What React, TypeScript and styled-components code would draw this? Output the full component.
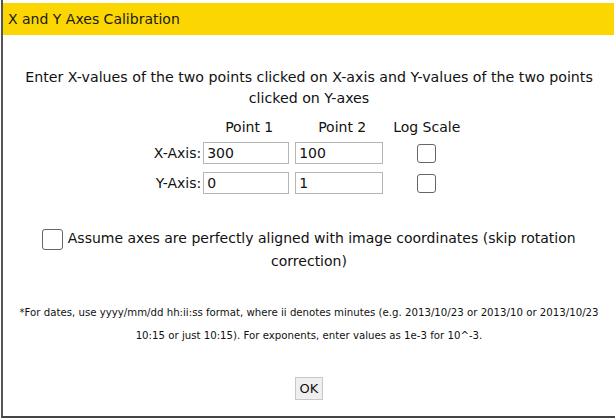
import styled, { createGlobalStyle } from "styled-components";

const GlobalStyle = createGlobalStyle`
  html, body {
    margin: 0;
    padding: 0;
    background: #ffffff;
  }
  body {
    font-family: "DejaVu Sans", Verdana, sans-serif;
    color: #111;
  }
`;

const Dialog = styled.div`
  box-sizing: border-box;
  width: 614px;
  height: 418px;
  margin-left: 1px;
  padding-top: 3px;
  border-left: 2px solid #555;
  border-bottom: 2px solid #444;
  display: flex;
  flex-direction: column;
`;

const TitleBar = styled.div`
  height: 32px;
  margin-right: 1px;
  background: #fcd600;
  display: flex;
  align-items: center;
  padding-left: 5px;
  font-size: 14px;
  color: #1a1a1a;
`;

const Body = styled.div`
  display: flex;
  flex-direction: column;
  align-items: center;
  padding: 32px 4px 0;
`;

const Intro = styled.p`
  margin: 0;
  text-align: center;
  font-size: 14.2px;
  line-height: 21px;
`;

const AxisTable = styled.table`
  margin-top: 3px;
  border-collapse: separate;
  border-spacing: 0 8px;
  font-size: 14px;
`;

const HeadCell = styled.th`
  font-weight: normal;
  text-align: center;
  padding: 0;
  line-height: 14px;
`;

const LabelCell = styled.td`
  text-align: right;
  padding: 0 2px 0 0;
`;

const Cell = styled.td`
  padding: 0 6px 0 0;
`;

const CheckCell = styled.td`
  width: 75px;
  padding: 0;
  text-align: center;
`;

const Field = styled.input<{ $w: number }>`
  box-sizing: border-box;
  width: ${(p) => p.$w}px;
  height: 22px;
  border: 1px solid #b5b5b5;
  padding: 1px 3px;
  font-family: "DejaVu Sans", Verdana, sans-serif;
  font-size: 14px;
  color: #111;
`;

const Box = styled.span<{ $size?: number }>`
  display: inline-block;
  box-sizing: border-box;
  width: ${(p) => p.$size ?? 19}px;
  height: ${(p) => p.$size ?? 19}px;
  border: 1px solid #666;
  border-radius: 3px;
  background: #fff;
  vertical-align: middle;
`;

const AlignRow = styled.div`
  margin-top: 25px;
  text-align: center;
  font-size: 14px;
  line-height: 23px;
  padding: 0 20px;
`;

const Footnote = styled.p`
  margin: 28px 0 0;
  text-align: center;
  font-size: 10.2px;
  line-height: 23px;
`;

const OkButton = styled.button`
  margin-top: 30px;
  height: 23px;
  padding: 0 4px;
  border: 1px solid #c8c8c8;
  background: #efefef;
  font-family: "DejaVu Sans", Verdana, sans-serif;
  font-size: 13px;
  color: #111;
`;

export default function App() {
  return (
    <>
      <GlobalStyle />
      <Dialog>
        <TitleBar>X and Y Axes Calibration</TitleBar>
        <Body>
          <Intro>
            Enter X-values of the two points clicked on X-axis and Y-values of the two points
            <br />
            clicked on Y-axes
          </Intro>
          <AxisTable>
            <thead>
              <tr>
                <HeadCell />
                <HeadCell>Point 1</HeadCell>
                <HeadCell>Point 2</HeadCell>
                <HeadCell>Log Scale</HeadCell>
              </tr>
            </thead>
            <tbody>
              <tr>
                <LabelCell>X-Axis:</LabelCell>
                <Cell><Field $w={86} defaultValue="300" /></Cell>
                <Cell><Field $w={88} defaultValue="100" /></Cell>
                <CheckCell><Box /></CheckCell>
              </tr>
              <tr>
                <LabelCell>Y-Axis:</LabelCell>
                <Cell><Field $w={86} defaultValue="0" /></Cell>
                <Cell><Field $w={88} defaultValue="1" /></Cell>
                <CheckCell><Box /></CheckCell>
              </tr>
            </tbody>
          </AxisTable>
          <AlignRow>
            <Box $size={21} /> Assume axes are perfectly aligned with image coordinates (skip rotation
            <br />
            correction)
          </AlignRow>
          <Footnote>
            *For dates, use yyyy/mm/dd hh:ii:ss format, where ii denotes minutes (e.g. 2013/10/23 or 2013/10 or 2013/10/23
            <br />
            10:15 or just 10:15). For exponents, enter values as 1e-3 for 10^-3.
          </Footnote>
          <OkButton>OK</OkButton>
        </Body>
      </Dialog>
    </>
  );
}
